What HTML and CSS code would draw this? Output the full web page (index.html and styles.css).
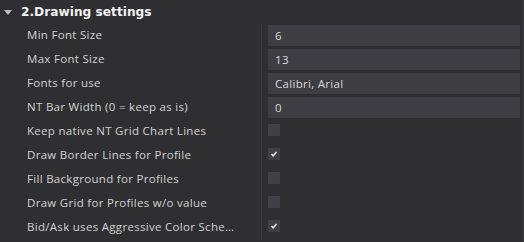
FILE: index.html
```html
<!DOCTYPE html>
<html lang="en">
<head>
    <meta charset="UTF-8">
    <title>Drawing settings</title>
    <link rel="stylesheet" href="styles.css">
</head>
<body>
    <div class="panel">
        <div class="section-header">
            <span class="caret"></span>
            <span class="section-title">2.Drawing settings</span>
        </div>

        <div class="prop-row">
            <div class="prop-label">Min Font Size</div>
            <div class="prop-value"><div class="text-field">6</div></div>
        </div>
        <div class="prop-row">
            <div class="prop-label">Max Font Size</div>
            <div class="prop-value"><div class="text-field">13</div></div>
        </div>
        <div class="prop-row">
            <div class="prop-label">Fonts for use</div>
            <div class="prop-value"><div class="text-field">Calibri, Arial</div></div>
        </div>
        <div class="prop-row">
            <div class="prop-label">NT Bar Width (0 = keep as is)</div>
            <div class="prop-value"><div class="text-field">0</div></div>
        </div>
        <div class="prop-row">
            <div class="prop-label">Keep native NT Grid Chart Lines</div>
            <div class="prop-value"><span class="check-box"></span></div>
        </div>
        <div class="prop-row">
            <div class="prop-label">Draw Border Lines for Profile</div>
            <div class="prop-value">
                <span class="check-box">
                    <svg width="12" height="12" viewBox="0 0 12 12"><path d="M3.5 6 L5.2 7.8 L8.5 4" fill="none" stroke="#e6e6e6" stroke-width="1.5"/></svg>
                </span>
            </div>
        </div>
        <div class="prop-row">
            <div class="prop-label">Fill Background for Profiles</div>
            <div class="prop-value"><span class="check-box"></span></div>
        </div>
        <div class="prop-row">
            <div class="prop-label">Draw Grid for Profiles w/o value</div>
            <div class="prop-value"><span class="check-box"></span></div>
        </div>
        <div class="prop-row">
            <div class="prop-label">Bid/Ask uses Aggressive Color Scheme</div>
            <div class="prop-value">
                <span class="check-box">
                    <svg width="12" height="12" viewBox="0 0 12 12"><path d="M3.5 6 L5.2 7.8 L8.5 4" fill="none" stroke="#e6e6e6" stroke-width="1.5"/></svg>
                </span>
            </div>
        </div>
    </div>
</body>
</html>
```

FILE: styles.css
```css
* {
    margin: 0;
    padding: 0;
    box-sizing: border-box;
}

body {
    font-family: "Open Sans", "DejaVu Sans", sans-serif;
    background-color: #2f2f31;
    color: #d2d2d2;
    width: 524px;
    height: 242px;
    overflow: hidden;
}

.panel {
    border-right: 1px solid #3c3c3f;
    height: 242px;
}

.section-header {
    display: flex;
    align-items: center;
    height: 24px;
    padding-left: 4px;
    padding-bottom: 1px;
    background-color: #2f2f31;
}

.caret {
    width: 0;
    height: 0;
    border-left: 4px solid transparent;
    border-right: 4px solid transparent;
    border-top: 5px solid #bdbdbd;
    margin-right: 9px;
    margin-top: 1px;
}

.section-title {
    font-family: "DejaVu Sans", sans-serif;
    font-weight: bold;
    font-size: 12.2px;
    color: #f2f2f2;
}

.prop-row {
    display: grid;
    grid-template-columns: 261px 1fr;
    height: 24px;
}

.prop-label {
    padding-left: 27px;
    padding-right: 22px;
    font-size: 11.5px;
    line-height: 21px;
    letter-spacing: 0.3px;
    white-space: nowrap;
    overflow: hidden;
    text-overflow: ellipsis;
}

.prop-value {
    border-left: 1px solid #3b3b3e;
    padding-left: 6px;
    padding-right: 3px;
    padding-top: 1px;
}

.text-field {
    height: 21px;
    background-color: #3e3d43;
    padding-left: 7px;
    font-size: 11.5px;
    line-height: 21px;
    letter-spacing: 0.3px;
    color: #d8d8d8;
}

.check-box {
    display: block;
    width: 12px;
    height: 12px;
    margin-top: 3px;
    background-color: #414046;
}

.check-box svg {
    display: block;
}
```
